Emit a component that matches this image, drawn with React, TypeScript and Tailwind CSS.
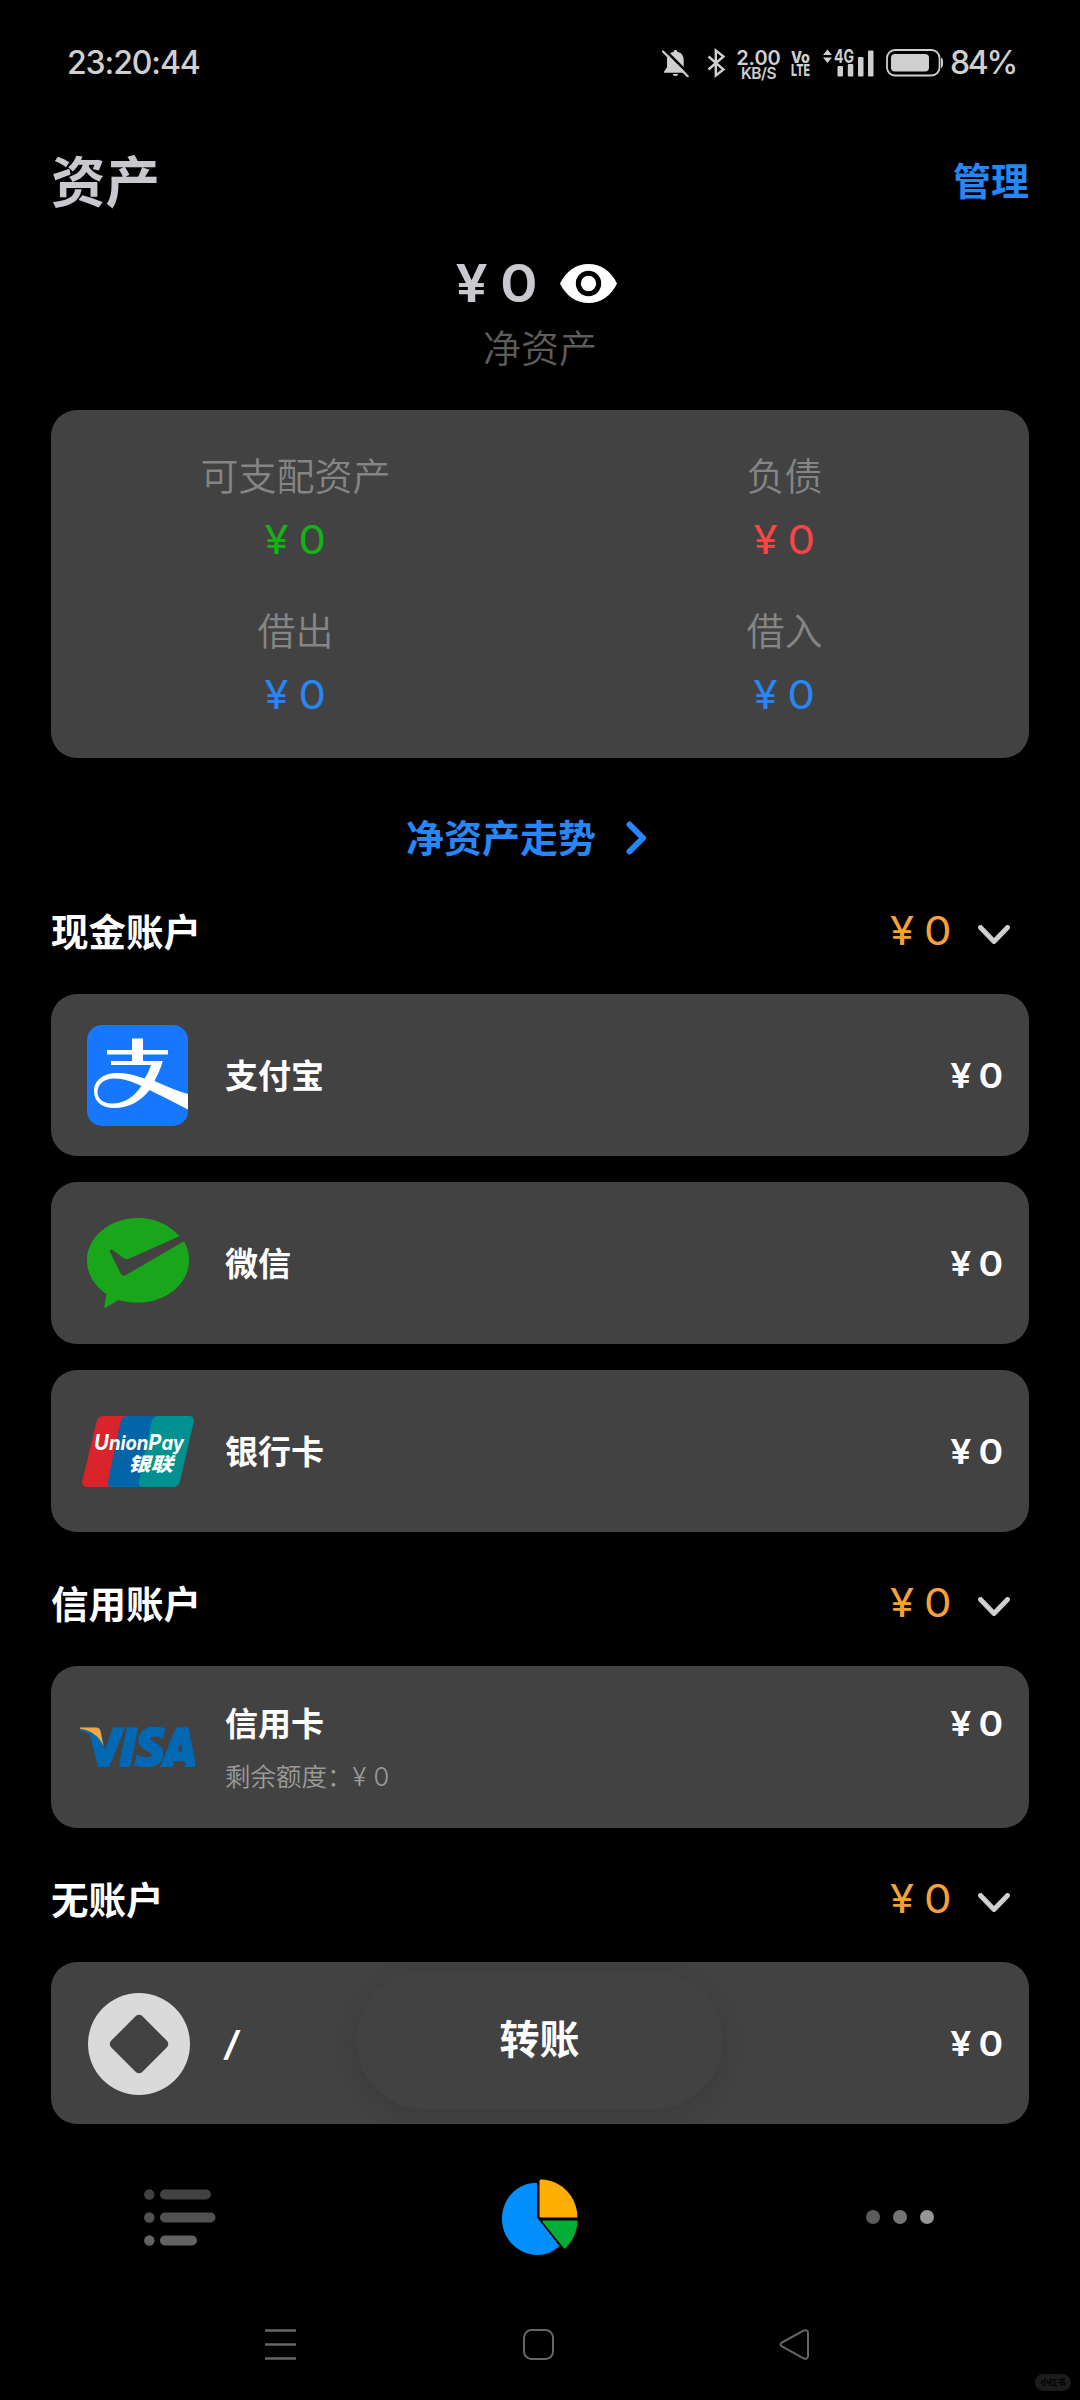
import type { ReactNode } from "react";
import { SiVisa } from "react-icons/si";

type Account = {
  name: string;
  amount: string;
  icon: ReactNode;
  note?: string;
};

type Group = {
  title: string;
  total: string;
  accounts: Account[];
};

function IconBellOff() {
  return (
    <svg width="27" height="29" viewBox="0 0 27 29">
      <path
        d="M13.5 1c1 0 1.7.7 1.8 1.7 4 .9 6.4 4 6.4 8v7.6l3 4.4v1H2v-1l3-4.4v-7.6c0-4 2.6-7.100 6.700-8C11.800 1.700 12.500 1 13.500 1z"
        fill="#cfcfcf"
      />
      <path d="M10.700 25h5.600c-.5 1.400-1.500 2-2.800 2s-2.300-.6-2.800-2z" fill="#cfcfcf" />
      <path d="M2.500 0.500L27 25" stroke="#000" strokeWidth="2.600" />
      <path d="M1 2.500L25.700 27.200" stroke="#cfcfcf" strokeWidth="2.200" strokeLinecap="round" />
    </svg>
  );
}

function IconBluetooth() {
  return (
    <svg width="19" height="30" viewBox="0 0 19 30" fill="none" stroke="#cfcfcf" strokeWidth="2.400">
      <path d="M1.500 8.500L16.500 21.500 8.800 27.500V2.500L16.500 8.500 1.500 21.500" strokeLinejoin="miter" />
    </svg>
  );
}

function IconSignal() {
  return (
    <svg className="overflow-visible" width="51" height="29" viewBox="0 0 51 29" fill="#cfcfcf">
      <path d="M0 6L4.500 0.500 9 6zM0 8.500H9L4.500 14z" />
      <text x="11" y="14" fontSize="19" fontWeight="700" textLength="20" lengthAdjust="spacingAndGlyphs">
        4G
      </text>
      <rect x="14.500" y="17" width="5.500" height="10.500" rx="1" />
      <rect x="24.800" y="15" width="5.500" height="12.500" rx="1" />
      <rect x="35" y="8" width="5.500" height="19.500" rx="1" />
      <rect x="45" y="1.500" width="5.500" height="26" rx="1" />
    </svg>
  );
}

function IconBattery() {
  return (
    <svg width="58" height="28" viewBox="0 0 58 28">
      <rect x="1" y="1" width="52.500" height="25.500" rx="8" fill="none" stroke="#cfcfcf" strokeWidth="1.800" />
      <rect x="5" y="5" width="38" height="17.500" rx="4" fill="#cfcfcf" />
      <path d="M55.500 9C57 10.500 57 17 55.500 18.500z" fill="#cfcfcf" stroke="#cfcfcf" />
    </svg>
  );
}

function IconEye() {
  return (
    <svg width="57" height="39" viewBox="0 0 57 39">
      <path d="M0 19.500C6 7 16.500 0 28.500 0S51 7 57 19.500C51 32 40.500 39 28.500 39S6 32 0 19.500z" fill="#fff" />
      <circle cx="28.500" cy="19.500" r="10.200" fill="none" stroke="#000" strokeWidth="5" />
    </svg>
  );
}

function IconAlipay() {
  return (
    <svg className="mr-0.5" width="101" height="101" viewBox="0 0 101 101">
      <rect width="101" height="101" rx="15" fill="#1777ff" />
      <path d="M20 25H45V13.500H56V25H81V29.500H56V38H45V29.500H20z" fill="#fff" />
      <path
        fillRule="evenodd"
        fill="#fff"
        d="M24 36H75.700C74 43 70.500 50 67.500 56 79 61 90 66 101 69V84.500C88 78 75 71 62.500 65 54 76 42 83 27 83 14 83 7 76 7 66 7 55 17 48 30 48 41 48 49 50.500 57.500 53.500 60.500 49 62.500 45 64 40H24zM54.500 61C46 57 37 53.500 27 53.500 16 53.500 10.500 60 10.500 67 10.500 74 16.500 78.500 25 78.500 38 78.500 47 71.500 54.500 61z"
      />
    </svg>
  );
}

function IconWechatPay() {
  return (
    <svg width="102" height="90" viewBox="0 0 102 90">
      <path
        d="M51 0C22.800 0 0 19 0 42.300 0 56 7.500 68 19.700 76L17.300 88.500C17.200 89.700 18 90 19 89.400L31.500 82C37.500 83.700 44 84.600 51 84.600 79.200 84.600 102 65.700 102 42.300 102 35.500 100.200 29 97 23.300L39 57C37 58.200 34.800 57.800 33.800 55.800L23 34C22.300 32.300 24.300 31 26 32.300L36 39.800C38 41.300 40 41.500 42.300 40.600L92.500 18.200C83 7 68 0 51 0z"
        fill="#1aa61a"
      />
    </svg>
  );
}

function IconUnionPay() {
  return (
    <svg width="112" height="71" viewBox="0 0 112 71">
      <path d="M22 0H48L34 71H5C1.500 71-.5 68.500.3 65L14.500 6C15.500 2 18 0 22 0z" fill="#d9242c" />
      <path d="M46 0H78L66 71H30C26.500 71 25.300 68.500 26 65L38.500 6C39.500 2 42 0 46 0z" fill="#0365a8" />
      <path
        d="M77 0H107C110.500 0 112.500 2 111.700 6L98 65C97 69 94.500 71 91 71H61C57.500 71 56.300 68.500 57 65L69.500 6C70.500 2 73 0 77 0z"
        fill="#029190"
      />
      <text x="12" y="34" fill="#fff" fontSize="20" fontWeight="700" fontStyle="italic" textLength="90" lengthAdjust="spacingAndGlyphs">
        <tspan fontSize="22">U</tspan>nion<tspan fontSize="22">P</tspan>ay
      </text>
      <text x="46" y="55" fill="#fff" fontSize="19" fontWeight="900" fontStyle="italic" textLength="45" lengthAdjust="spacingAndGlyphs">
        银联
      </text>
    </svg>
  );
}

function IconVisa() {
  return (
    <div className="relative h-10 w-[116px]">
      <SiVisa
        viewBox="0 8 24 8"
        preserveAspectRatio="none"
        stroke="currentColor"
        strokeWidth="0.45"
        className="h-10 w-[115px] text-[#0268b3]"
      />
      <svg className="absolute left-0 top-0" width="24" height="19" viewBox="0 0 24 19">
        <path d="M0 .5H16C18.500 .5 20 2 20.500 4.500L23.500 19C19 9 11 3.500 0 1.800z" fill="#f7a63c" />
      </svg>
    </div>
  );
}

function IconNone() {
  return (
    <svg className="ml-px mt-px" width="102" height="102" viewBox="0 0 102 102">
      <circle cx="51" cy="51" r="51" fill="#dadada" />
      <rect x="29" y="29" width="44" height="44" rx="4.500" transform="rotate(45 51 51)" fill="#424242" />
    </svg>
  );
}

function IconChevronDown() {
  return (
    <svg width="32" height="20" viewBox="0 0 32 20" fill="none">
      <path d="M2.500 2.500L16 16.500 29.500 2.500" stroke="#cfcfcf" strokeWidth="4.900" strokeLinecap="round" strokeLinejoin="round" />
    </svg>
  );
}

const summary = [
  { label: "可支配资产", value: "¥ 0", color: "text-[#12b412]" },
  { label: "负债", value: "¥ 0", color: "text-[#fb4545]" },
  { label: "借出", value: "¥ 0", color: "text-[#2787f8]" },
  { label: "借入", value: "¥ 0", color: "text-[#2787f8]" },
];

const groups: Group[] = [
  {
    title: "现金账户",
    total: "¥ 0",
    accounts: [
      { name: "支付宝", amount: "¥ 0", icon: <IconAlipay /> },
      { name: "微信", amount: "¥ 0", icon: <IconWechatPay /> },
      { name: "银行卡", amount: "¥ 0", icon: <IconUnionPay /> },
    ],
  },
  {
    title: "信用账户",
    total: "¥ 0",
    accounts: [{ name: "信用卡", amount: "¥ 0", icon: <IconVisa />, note: "剩余额度：" }],
  },
  {
    title: "无账户",
    total: "¥ 0",
    accounts: [{ name: "/", amount: "¥ 0", icon: <IconNone /> }],
  },
];

function StatusBar() {
  return (
    <div className="flex h-[126px] items-center justify-between pl-[67px] pr-[64px] text-[#cfcfcf]">
      <span className="text-[32px] font-medium tracking-[-1.1px]">23:20:44</span>
      <div className="flex items-center">
        <IconBellOff />
        <div className="ml-[18px]">
          <IconBluetooth />
        </div>
        <div className="ml-[11px] flex w-[43px] flex-col items-center pt-1 font-semibold">
          <span className="text-[20px] leading-[16px]">2.00</span>
          <span className="text-[15.500px] leading-[15px] tracking-[-0.5px]">KB/S</span>
        </div>
        <svg className="ml-[11px] overflow-visible" width="20" height="28" viewBox="0 0 20 28" fill="#cfcfcf" fontWeight="800">
          <text x="0" y="13.500" fontSize="16" textLength="19" lengthAdjust="spacingAndGlyphs">
            Vo
          </text>
          <text x="0" y="26.500" fontSize="16" textLength="19" lengthAdjust="spacingAndGlyphs">
            LTE
          </text>
        </svg>
        <div className="ml-[12px]">
          <IconSignal />
        </div>
        <div className="ml-[12px]">
          <IconBattery />
        </div>
        <span className="ml-[6px] text-[32px] font-medium tracking-[-2.300px]">84%</span>
      </div>
    </div>
  );
}

function AccountCard({ account }: { account: Account }) {
  return (
    <div className="flex h-[162px] items-center rounded-[26px] bg-[#424242] pr-[26px] text-white">
      <div className="flex w-[174px] shrink-0 items-center justify-center">
        <div>{account.icon}</div>
      </div>
      {account.note ? (
        <div className="flex h-full flex-1 flex-col pt-[38px]">
          <div className="flex h-10 items-center justify-between">
            <span className="text-[33px] font-bold">{account.name}</span>
            <span className="origin-right scale-x-[1.1] text-[34px] font-semibold [word-spacing:-2px]">{account.amount}</span>
          </div>
          <div className="mt-[13px] flex h-10 items-center text-[25.500px] font-[350] text-[#9b9b9b]">
            {account.note}
            {account.amount}
          </div>
        </div>
      ) : (
        <div className="flex flex-1 items-center justify-between pt-[2px]">
          <span className={account.name === "/" ? "text-[34px] font-bold italic" : "text-[33px] font-bold"}>{account.name}</span>
          <span className="origin-right scale-x-[1.1] text-[34px] font-semibold [word-spacing:-2px]">{account.amount}</span>
        </div>
      )}
    </div>
  );
}

function TabBar() {
  return (
    <nav className="grid h-[186px] grid-cols-3 items-center justify-items-center">
      <svg width="72" height="57" viewBox="0 0 72 57">
        <g fill="#414141">
          <circle cx="5.300" cy="5.500" r="5.200" />
          <rect x="16" y="0.500" width="51" height="10" rx="5" />
        </g>
        <g fill="#515151">
          <circle cx="5.300" cy="28.500" r="5.200" />
          <rect x="16" y="23.500" width="55.500" height="10" rx="5" />
        </g>
        <g fill="#636363">
          <circle cx="5.300" cy="51.500" r="5.200" />
          <rect x="16" y="46.500" width="37" height="10" rx="5" />
        </g>
      </svg>
      <svg className="mb-px" width="76" height="76" viewBox="0 0 76 76">
        <path d="M34.500 4C35 4 35 4 35 4.500V38.500L57 66.500C57 67 57 67.500 56.500 68 50.500 73 43.500 76 36 76 16 76 0 60 0 40 0 20 15 4 33 4z" fill="#0290ff" />
        <path d="M37.500 2C37.500 1 38.500.5 39.500.5 59.500 1.500 75 17 75.500 38.500H39C38 38.500 37.500 38 37.500 37z" fill="#ffaf00" />
        <path d="M41 41.500H75.500C75.500 52 70.500 63 62.500 70L41 43.500C40.300 42.500 40.200 41.500 41 41.500z" fill="#02ae36" />
      </svg>
      <div className="flex gap-[13px]">
        <span className="size-[14px] rounded-full bg-[#5c5c5c]" />
        <span className="size-[14px] rounded-full bg-[#757575]" />
        <span className="size-[14px] rounded-full bg-[#969696]" />
      </div>
    </nav>
  );
}

function SystemNav() {
  return (
    <div className="flex h-[69px] justify-center pr-[5px] pt-[19px]">
      <svg width="31" height="31" viewBox="0 0 31 31" stroke="#666" strokeWidth="2.600">
        <path d="M0 1.500H31M0 15.500H31M0 29.500H31" />
      </svg>
      <svg className="ml-[227px] mr-[225px]" width="31" height="31" viewBox="0 0 31 31" fill="none" stroke="#666" strokeWidth="2">
        <rect x="1" y="1" width="29" height="29" rx="7.500" />
      </svg>
      <svg width="31" height="31" viewBox="0 0 31 31" fill="none" stroke="#666" strokeWidth="2">
        <path d="M3 13.500L24.500 1.700C27 .5 29 1.500 29 4V27C29 29.500 27 30.500 24.500 29.300L3 17.500C1 16.300 1 14.700 3 13.500z" />
      </svg>
    </div>
  );
}

export default function App() {
  return (
    <div className="relative h-[2400px] w-[1080px] overflow-hidden bg-black font-['Inter','Noto_Sans_CJK_SC',sans-serif] leading-none">
      <StatusBar />

      <header className="flex h-[110px] items-center justify-between px-[51px]">
        <h1 className="pt-0.5 text-[54.500px] font-bold text-[#cbc7cf]">资产</h1>
        <button className="text-[38px] font-bold text-[#2787f8]">管理</button>
      </header>

      <section className="flex flex-col items-center pt-4">
        <div className="flex h-[60px] items-center gap-[23px] pt-[3px]">
          <span className="origin-right scale-x-[1.1] text-[52px] font-semibold text-[#cbc7cf] [word-spacing:-2px]">¥ 0</span>
          <IconEye />
        </div>
        <div className="mt-4 flex h-10 items-center text-[38px] font-[350] text-[#5d5d5d]">净资产</div>
      </section>

      <section className="mx-[51px] mt-[42px] grid h-[348px] grid-cols-2 content-start gap-y-[51px] rounded-[26px] bg-[#424242] pt-[46px]">
        {summary.map((item) => (
          <div key={item.label} className="flex flex-col items-center gap-6">
            <span className="flex h-10 items-center text-[38px] font-[350] text-[#858585]">{item.label}</span>
            <span className={`flex h-10 scale-x-[1.09] items-center text-[40px] [word-spacing:-2px] ${item.color}`}>{item.value}</span>
          </div>
        ))}
      </section>

      <div className="flex h-[102px] items-start justify-center pr-[27px] pt-[60px]">
        <button className="flex h-10 items-center gap-[30px] text-[38px] font-bold text-[#2787f8]">
          净资产走势
          <svg width="21" height="34" viewBox="0 0 21 34" fill="none">
            <path d="M3.500 3.500L17 17 3.500 30.500" stroke="#2787f8" strokeWidth="6" strokeLinecap="round" strokeLinejoin="round" />
          </svg>
        </button>
      </div>

      {groups.map((group) => (
        <section key={group.title} className="px-[51px]">
          <div className="flex h-[134px] items-center justify-between pr-[19px] pt-2.5">
            <h2 className="pt-px text-[37.500px] font-bold text-white">{group.title}</h2>
            <div className="flex items-center gap-[27px]">
              <span className="origin-right scale-x-[1.09] pb-[3px] text-[40px] text-[#f7a03a] [word-spacing:-2px]">{group.total}</span>
              <div className="pt-[5px]">
                <IconChevronDown />
              </div>
            </div>
          </div>
          <div className="flex flex-col gap-[26px]">
            {group.accounts.map((account) => (
              <AccountCard key={account.name} account={account} />
            ))}
          </div>
        </section>
      ))}

      {/* floating transfer button over the last card */}
      <button className="absolute left-[356px] top-[1971px] flex h-[138px] w-[367px] items-center justify-center rounded-[69px] bg-[#424242] text-[40px] font-bold text-white shadow-[0_6px_24px_rgba(0,0,0,0.11)]">
        转账
      </button>

      <TabBar />
      <SystemNav />

      <span className="absolute bottom-[9px] right-[9px] flex h-[17px] w-[36px] items-center justify-center rounded-full bg-[#1b1b1b] text-[8.500px] font-bold text-black">
        小红书
      </span>
    </div>
  );
}
